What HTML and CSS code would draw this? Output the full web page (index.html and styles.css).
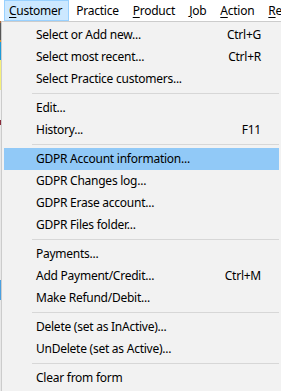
FILE: index.html
```html
<!DOCTYPE html>
<html lang="en">
<head>
    <meta charset="UTF-8" />
    <title>Customer menu</title>
    <link rel="stylesheet" href="styles.css">
</head>
<body>
    <div class="menubar">
        <span class="menu-title active"><u>C</u>ustomer</span>
        <span class="menu-title">Practice</span>
        <span class="menu-title"><u>P</u>roduct</span>
        <span class="menu-title"><u>J</u>ob</span>
        <span class="menu-title"><u>A</u>ction</span>
        <span class="menu-title"><u>R</u>eports</span>
    </div>

    <div class="dropdown">
        <div class="item"><span>Select or Add new...</span><span class="key">Ctrl+G</span></div>
        <div class="item"><span>Select most recent...</span><span class="key">Ctrl+R</span></div>
        <div class="item"><span>Select Practice customers...</span></div>
        <div class="sep"></div>
        <div class="item"><span>Edit...</span></div>
        <div class="item"><span>History...</span><span class="key">F11</span></div>
        <div class="sep"></div>
        <div class="item hover"><span>GDPR Account information...</span></div>
        <div class="item"><span>GDPR Changes log...</span></div>
        <div class="item"><span>GDPR Erase account...</span></div>
        <div class="item"><span>GDPR Files folder...</span></div>
        <div class="sep"></div>
        <div class="item"><span>Payments...</span></div>
        <div class="item"><span>Add Payment/Credit...</span><span class="key">Ctrl+M</span></div>
        <div class="item"><span>Make Refund/Debit...</span></div>
        <div class="sep"></div>
        <div class="item"><span>Delete (set as InActive)...</span></div>
        <div class="item"><span>UnDelete (set as Active)...</span></div>
        <div class="sep"></div>
        <div class="item"><span>Clear from form</span></div>
    </div>
</body>
</html>
```

FILE: styles.css
```css
* {
    box-sizing: border-box;
    margin: 0;
    padding: 0;
}
body {
    width: 281px;
    height: 391px;
    overflow: hidden;
    font-family: 'Noto Sans', sans-serif;
    font-size: 12px;
    letter-spacing: -0.25px;
    color: #000;
    /* strip of the application window showing at the left edge */
    background: linear-gradient(to bottom,
        #fff 0 21px, #b06a3c 21px 23px, #555 23px 40px, #e0902a 40px 42px,
        #1e9bd7 42px 60px, #f5f07a 60px 90px, #f0f0f0 90px 120px,
        #8a2a3a 120px 125px, #e8e8e8 125px 280px, #4aa0e0 280px 300px,
        #e8e8e8 300px) no-repeat 0 0 / 1px 100%, #fff;
}
.menubar {
    display: flex;
    height: 21px;
    padding-left: 4px;
    background: #fff;
    white-space: nowrap;
}
.menu-title {
    display: flex;
    align-items: center;
    padding: 0 6px 1px 4px;
    margin-right: 2px;
    border: 1px solid transparent;
}
.menu-title.active {
    background: #cce8ff;
    border-color: #99d1ff;
}
.menu-title u {
    text-decoration-thickness: 1px;
    text-underline-offset: 2px;
}
.dropdown {
    width: 281px;
    height: 380px;
    margin-left: 1px;
    padding: 2px;
    border: 1px solid #cccccc;
    background: #f2f2f2;
}
.item {
    display: flex;
    justify-content: space-between;
    align-items: center;
    height: 22px;
    padding: 0 18px 1px 32px;
    white-space: nowrap;
}
.item.hover {
    background: #91c9f7;
}
.sep {
    margin: 3px 0 3px 28px;
    border-top: 1px solid #d7d7d7;
}
```
